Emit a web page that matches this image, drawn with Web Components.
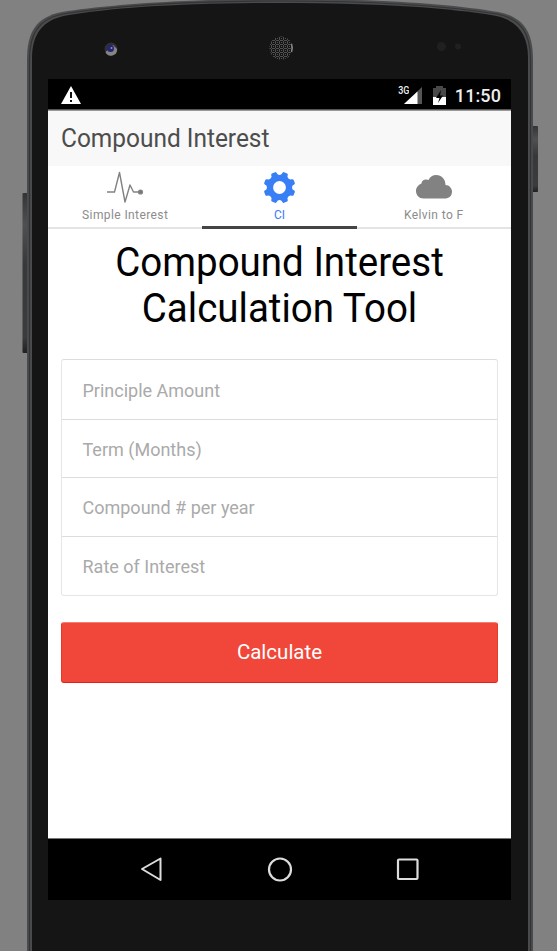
<!DOCTYPE html>
<html lang="en"><head><meta charset="utf-8"><title>Compound Interest</title>
<style>html,body{margin:0;height:100%;overflow:hidden;background:#818181}body{font-family:Roboto,"Liberation Sans",sans-serif}</style></head>
<body>
<phone-frame>
<status-bar></status-bar>
<app-header>Compound Interest</app-header>
<tab-bar>
<tab-item><svg slot="icon" width="40" height="34" viewBox="0 0 40 34" fill="none" stroke="#828282" stroke-width="1.4" stroke-linejoin="round"><path d="M2 22H9.500L14.500 2.500L20 32L25 15L28.500 22H35"/><circle cx="35.500" cy="22" r="1.900" fill="#777"/></svg>Simple Interest</tab-item>
<tab-item active><svg slot="icon" width="32" height="32" viewBox="-16.5 -16.5 32 32"><g fill="#387ef5"><path id="gear" fill-rule="evenodd"/></g></svg>CI</tab-item>
<tab-item><svg slot="icon" width="38" height="32" viewBox="0 0 38 32"><path fill="#828282" d="M8.500 27.500C4 27.500 1 24 1 20C1 16 4 13.500 6.500 12.500C6.500 9 11 7.500 13.500 9C15 5.500 18 4 21 4C27 4 30.500 8.500 30.500 14C34.500 14 37 17.500 37 20.500C37 25 34 27.500 29.500 27.500Z"/></svg>Kelvin to F</tab-item>
</tab-bar>
<calc-form heading="Compound Interest Calculation Tool">
<form-field label="Principle Amount"></form-field><form-field label="Term (Months)"></form-field><form-field label="Compound # per year"></form-field><form-field label="Rate of Interest"></form-field>
<action-button slot="action">Calculate</action-button>
</calc-form>
<nav-keys></nav-keys>
</phone-frame>
<script>
const define=(name,html,init)=>customElements.define(name,class extends HTMLElement{
 constructor(){super();this.attachShadow({mode:'open'}).innerHTML=html;}
 connectedCallback(){if(init)init(this,this.shadowRoot);}
});
/* Gear outline: eight rounded teeth around an open hub */
let d='';
for(let i=0;i<8;i++){
 const p=(deg,r)=>{const a=(i*45+deg-67.5)*Math.PI/180;return (r*Math.cos(a)).toFixed(2)+' '+(r*Math.sin(a)).toFixed(2);};
 d+=(i?'L':'M')+p(-14,13.3)+'L'+p(-11,15)+'Q'+p(-9,16)+' '+p(-6,16)+'L'+p(6,16)+'Q'+p(9,16)+' '+p(11,15)+'L'+p(14,13.3)+'Q'+p(22.5,12)+' '+p(31,13.3);
}
document.getElementById('gear').setAttribute('d',d+'ZM6.4 0A6.4 6.4 0 1 0 -6.4 0A6.4 6.4 0 1 0 6.4 0Z');

define('phone-frame',`<style>
:host{display:block;position:relative;width:557px;height:951px;box-sizing:border-box;padding:79px 46px 51px 48px;background:#818181}
.shell{position:absolute;inset:0}
.screen{position:relative;height:821px;display:flex;flex-direction:column;background:#fff}
</style>
<svg class="shell" width="557" height="951" viewBox="0 0 557 951">
<defs><linearGradient id="k" x2="0" y2="1"><stop offset="0" stop-color="#343434"/><stop offset=".2" stop-color="#505050"/><stop offset=".45" stop-color="#373839"/><stop offset=".9" stop-color="#3c3c3c"/><stop offset="1" stop-color="#202020"/></linearGradient>
<pattern id="mesh" width="4" height="4" patternUnits="userSpaceOnUse"><path d="M0 .5h3M3.500 1v3M1 2.500h1" stroke="#505050"/></pattern></defs>
<rect x="22.500" y="193" width="6" height="160" rx="1" fill="url(#k)"/><rect x="531" y="126" width="7" height="66" rx="1" fill="url(#k)"/>
<path d="M27 951V60C27 32 36 17 62 12C100 6 170 -1 278 -1C386 -1 450 4 498 12C524 17 533 32 533 60V951Z" fill="#4a4b4d"/>
<path d="M29.500 951V60C29.500 34 38 19 63 14C110 6.500 180 1 278 1C386 1 450 6.500 497 14C522 19 530.500 34 530.500 60V951" fill="none" stroke="#343436" stroke-width="1.200"/>
<path d="M32 951V58C32 35 42 20 66 15.500C110 8 180 3 278 3C386 3 448 8 494 15.500C518 20 528 35 528 58V951Z" fill="#151515"/>
<circle cx="111" cy="49" r="6.500" fill="#303030"/><path d="M105.500 52A6 6 0 0 0 117 49L113 45Z" fill="#858585"/><circle cx="110.500" cy="48.500" r="3.500" fill="#252575"/><circle cx="111.500" cy="48" r="1" fill="#8b8bca"/>
<circle cx="281" cy="48" r="11.500" fill="url(#mesh)"/><path d="M291.500 44q1.500 4 0 8" fill="none" stroke="#888" stroke-width="1.500"/>
<circle cx="441.500" cy="46.500" r="4.500" fill="#202020"/><circle cx="458" cy="46.500" r="3" fill="#202020"/>
</svg><div class="screen"><slot></slot></div>`);

define('status-bar',`<style>
:host{display:flex;height:31px;background:#000;color:#eee;align-items:center;box-sizing:border-box;padding:2px 10px 0 13px;border-bottom:1px solid #555}
svg{display:block;flex:none}.alert{margin-right:auto}.net{display:flex;align-items:flex-start}.net b{font:500 11px/11px Roboto,sans-serif;letter-spacing:-.4px;margin:-1px -5px 0 0;transform:scaleX(.82);transform-origin:right}
.bat{margin:0 9px 0 11px}.time{font-size:18px;font-weight:500;letter-spacing:.1px}
</style><svg class="alert" width="20" height="18"><path fill="#fff" d="M10 0L20 18H0Z"/><path stroke="#111" stroke-width="2" d="M10 6v6M10 14v2"/></svg>
<div class="net"><b>3G</b><svg width="18" height="18"><path d="M18 1V18H0Z" fill="#555"/><path d="M13.500 5.500V18H0Z" fill="#fff"/></svg></div>
<svg class="bat" width="13" height="19"><path d="M3 0H10V2H13V19H0V2H3Z" fill="#484848"/><path d="M0 11H13V19H0Z" fill="#fff"/><path d="M8 4L3 12H6.500L5 17L10 9.500H7Z" fill="#000"/></svg>
<span class="time">11:50</span>`);

define('app-header',`<style>:host{display:block;height:56px;box-sizing:border-box;padding-left:13px;background:#f8f8f8;border-top:1px solid #999;font-size:26px;line-height:54px;color:#4d4d4d}span{display:inline-block;transform:scaleX(.94);transform-origin:left}</style><span><slot></slot></span>`);
define('tab-bar',`<style>:host{display:grid;grid-template-columns:repeat(3,1fr);height:63px;background:#fff}</style><slot></slot>`);
define('tab-item',`<style>:host{display:flex;flex-direction:column;align-items:center;box-sizing:border-box;border-bottom:2px solid #e4e4e4;color:#8c8c8c;font-size:12px;letter-spacing:.4px;line-height:14px}
:host([active]){color:#387ef5;border-bottom:3px solid #444;letter-spacing:0}.icon{height:34px;display:flex;align-items:center;padding:4px 0 4px}</style><div class="icon"><slot name="icon"></slot></div><span><slot></slot></span>`);
define('calc-form',`<style>:host{display:block;flex:1;padding:10px 13px 0}
h1{margin:0 0 28px;font-size:41.500px;line-height:46px;font-weight:400;text-align:center;color:#000;transform:scaleX(.928)}
.list{height:237px;display:grid;grid-template-rows:60px 58px 59px 1fr;box-sizing:border-box;border:1px solid #e6e6e6;border-top-color:#ddd;border-radius:3px;margin-bottom:26px}</style><h1></h1><div class="list"><slot></slot></div><slot name="action"></slot>`,(h,r)=>{r.querySelector('h1').textContent=h.getAttribute('heading')});
define('form-field',`<style>:host{display:flex;align-items:center;padding:1px 20.500px 0;font-size:18px;color:#aaa;border-bottom:1px solid #ddd}:host(:last-of-type){border-bottom:0}</style><span></span>`,(h,r)=>{r.querySelector('span').textContent=h.getAttribute('label')});
define('action-button',`<style>:host{display:block;height:61px;box-sizing:border-box;border:1px solid #e8382a;border-top-color:#f47c72;border-bottom:1px solid #e42112;border-radius:3px;background:#f1473a;color:#fff;font-size:20.500px;line-height:59px;text-align:center}</style><slot></slot>`);
define('nav-keys',`<style>:host{display:grid;grid-template-columns:repeat(3,128.500px);justify-content:center;align-items:center;justify-items:center;height:62px;box-sizing:border-box;background:#000;border-top:1px solid #777;padding:0 0 1px 0}</style>
<svg width="24" height="26" fill="none" stroke="#ddd" stroke-width="2" stroke-linejoin="round"><path d="M21.500 2.500V24L3 13Z"/></svg>
<svg width="26" height="26" fill="none" stroke="#ddd" stroke-width="2.200"><circle cx="13" cy="13.500" r="11"/></svg>
<svg width="24" height="24" fill="none" stroke="#ddd" stroke-width="2.200"><rect x="2" y="2.500" width="19.500" height="19.500" rx="1"/></svg>`);
</script></body></html>
